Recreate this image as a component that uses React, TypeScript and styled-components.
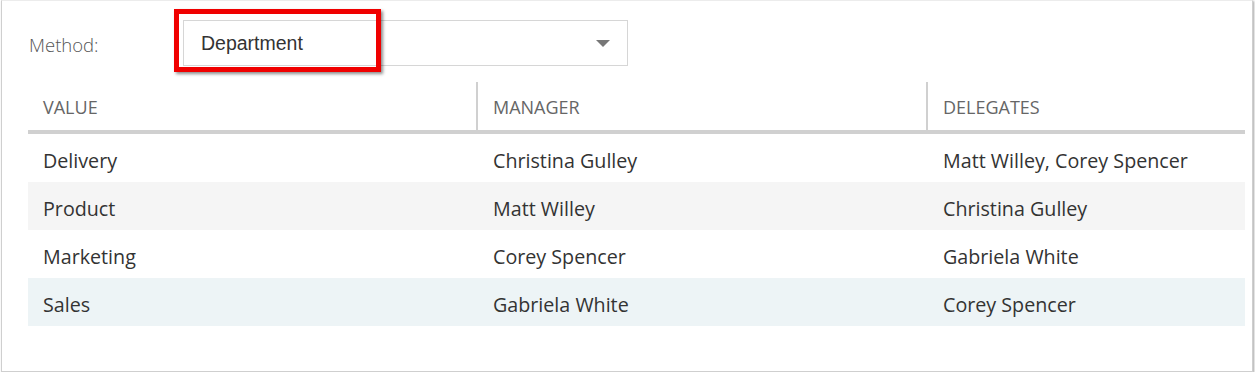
import React from "react";
import styled, { createGlobalStyle } from "styled-components";

const GlobalStyle = createGlobalStyle`
  html, body {
    margin: 0;
    padding: 0;
    background: #ffffff;
  }
  body {
    font-family: "Open Sans", "Noto Sans", sans-serif;
  }
`;

const Panel = styled.div`
  margin: 0 2px 0 1px;
  height: 372px;
  box-sizing: border-box;
  border: 1px solid #cfcfcf;
  border-top-color: #ececec;
  box-shadow: 1px 1px 2px rgba(0, 0, 0, 0.35);
  padding: 19px 7px 0 26px;
  background: #ffffff;
`;

const MethodRow = styled.div`
  display: flex;
  align-items: center;
  height: 46px;
`;

const MethodLabel = styled.label`
  width: 155px;
  padding-left: 1px;
  box-sizing: border-box;
  font-family: "Open Sans", sans-serif;
  font-weight: 300;
  font-size: 18.5px;
  color: #555555;
  padding-top: 3px;
`;

const SelectWrap = styled.div`
  position: relative;
  width: 445px;
  height: 46px;
`;

const SelectBox = styled.div`
  box-sizing: border-box;
  height: 100%;
  border: 1px solid #d6d6d6;
  display: flex;
  align-items: center;
  justify-content: space-between;
  padding: 0 17px 0 17px;
  font-family: "Liberation Sans", Arial, sans-serif;
  font-size: 19.5px;
  color: #333333;
`;

const Caret = styled.span`
  width: 0;
  height: 0;
  border-left: 7px solid transparent;
  border-right: 7px solid transparent;
  border-top: 7px solid #777777;
  margin-top: 1px;
`;

const Highlight = styled.div`
  position: absolute;
  left: -9px;
  top: -11px;
  width: 207px;
  height: 63px;
  box-sizing: border-box;
  border: 5px solid #f00000;
  box-shadow: 2px 2px 3px rgba(0, 0, 0, 0.45);
  pointer-events: none;
`;

const Table = styled.div`
  margin-top: 16px;
  width: 1217px;
`;

const Row = styled.div<{ $bg?: string }>`
  display: grid;
  grid-template-columns: 448px 450px 1fr;
  height: 48px;
  align-items: center;
  background: ${(p) => p.$bg || "#ffffff"};
`;

const HeaderRow = styled.div`
  display: grid;
  grid-template-columns: 448px 450px 1fr;
  height: 48px;
  border-bottom: 4px solid #d0d0d0;
`;

const HeaderCell = styled.div<{ $divider?: boolean }>`
  display: flex;
  align-items: center;
  padding: 1px 0 0 15px;
  border-left: ${(p) => (p.$divider ? "2px solid #d0d0d0" : "none")};
  font-family: "Open Sans", sans-serif;
  font-weight: 400;
  font-size: 18px;
  text-transform: uppercase;
  color: #666666;
`;

const Cell = styled.div<{ $offset?: boolean }>`
  padding-left: ${(p) => (p.$offset ? "17px" : "15px")};
  padding-top: 4px;
  font-family: "Open Sans", sans-serif;
  font-size: 19.7px;
  color: #333333;
  white-space: nowrap;
`;

const rows = [
  { value: "Delivery", manager: "Christina Gulley", delegates: "Matt Willey, Corey Spencer", bg: "#ffffff" },
  { value: "Product", manager: "Matt Willey", delegates: "Christina Gulley", bg: "#f5f5f5" },
  { value: "Marketing", manager: "Corey Spencer", delegates: "Gabriela White", bg: "#ffffff" },
  { value: "Sales", manager: "Gabriela White", delegates: "Corey Spencer", bg: "#edf4f6" },
];

const App: React.FC = () => {
  return (
    <>
      <GlobalStyle />
      <Panel>
        <MethodRow>
          <MethodLabel>Method:</MethodLabel>
          <SelectWrap>
            <SelectBox>
              <span>Department</span>
              <Caret />
            </SelectBox>
            <Highlight />
          </SelectWrap>
        </MethodRow>
        <Table>
          <HeaderRow>
            <HeaderCell>Value</HeaderCell>
            <HeaderCell $divider>Manager</HeaderCell>
            <HeaderCell $divider>Delegates</HeaderCell>
          </HeaderRow>
          {rows.map((r) => (
            <Row key={r.value} $bg={r.bg}>
              <Cell>{r.value}</Cell>
              <Cell $offset>{r.manager}</Cell>
              <Cell $offset>{r.delegates}</Cell>
            </Row>
          ))}
        </Table>
      </Panel>
    </>
  );
};

export default App;
